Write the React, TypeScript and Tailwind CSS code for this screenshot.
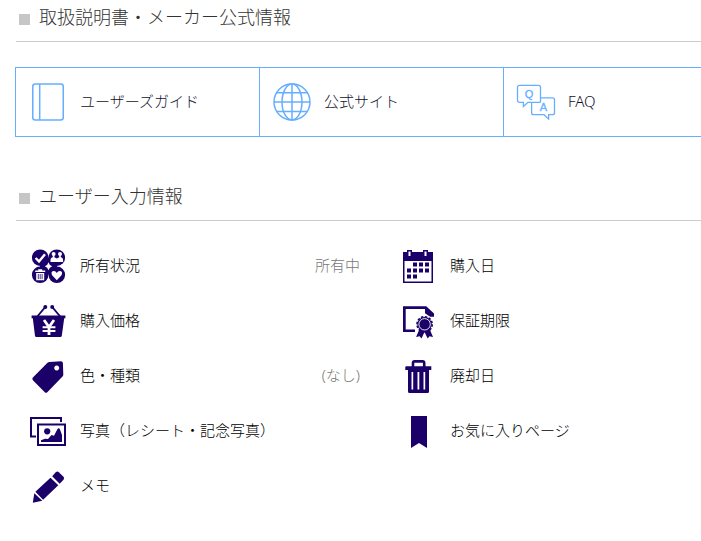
import type { ReactNode } from "react";

const navy = "#1a0068";
const sky = "#66aeff";

function LineIcon({ children }: { children: ReactNode }) {
  return (
    <svg viewBox="0 0 40 40" className="h-10 w-10" fill="none" stroke={sky} strokeWidth="1.5" aria-hidden="true">
      {children}
    </svg>
  );
}

function SolidIcon({ children }: { children: ReactNode }) {
  return (
    <svg viewBox="0 0 40 41" className="h-[41px] w-10" fill={navy} aria-hidden="true">
      {children}
    </svg>
  );
}

const BookIcon = () => (
  <LineIcon>
    <rect x="4.75" y="2" width="30.5" height="36" rx="2.5" />
    <path d="M11.7 2v36" />
  </LineIcon>
);

const GlobeIcon = () => (
  <LineIcon>
    <circle cx="20" cy="20" r="18" />
    <ellipse cx="20" cy="20" rx="10" ry="18" />
    <path d="M20 2v36M2 20h36M4.7 10.7h30.6M4.7 29.5h30.6" />
  </LineIcon>
);

const FaqIcon = () => (
  <LineIcon>
    <path
      strokeWidth="1.3"
      d="M24.5 20.3H12l-4.6 4.2v-4.2H3.5a2 2 0 0 1-2-2v-13a2 2 0 0 1 2-2h19a2 2 0 0 1 2 2v10.6h12a2 2 0 0 1 2 2v12.8a2 2 0 0 1-2 2h-3.9v4.4l-4.6-4.4H17.6a2 2 0 0 1-2-2V20.3M24.5 15.9v4.4"
    />
    <g fill={sky} strokeWidth="0.3" fontFamily="Liberation Sans, sans-serif" fontSize="11" textAnchor="middle">
      <text x="13" y="16">Q</text>
      <text x="27.3" y="28.5">A</text>
    </g>
  </LineIcon>
);

const StatusIcon = () => (
  <SolidIcon>
    <path d="M12 12.5h17v17H12z" />
    <circle cx="12.2" cy="12.7" r="8.3" />
    <circle cx="28.8" cy="12.7" r="8.3" />
    <circle cx="12.2" cy="29.8" r="8.3" />
    <circle cx="28.8" cy="29.8" r="8.3" />
    <path fill="#fff" d="M20.5 17.3Q21.3 20.5 24.2 21.2 21.3 22 20.5 25.2 19.7 22 16.8 21.2 19.7 20.5 20.5 17.3z" />
    <path fill="none" stroke="#fff" strokeWidth="2.4" d="M7.6 13l3.4 3.4 6-7.2" />
    <g fill="#fff">
      <circle cx="25.6" cy="9" r="2" />
      <circle cx="32" cy="9" r="2" />
      <path d="M22.5 17v-1.6q0-3 2.3-3.2v-2h1.6v2l2.4 1.2 2.4-1.2v-2h1.6v2q2.3.2 2.3 3.2V17z" />
      <path d="M10.2 24.2h4v1.3h3V27H7.2v-1.5h3zM8.2 28h8v7.2h-8z" />
      <path d="M28.8 35.2l-4.7-5q-1.7-3.6 1.4-4.2 2.2-.2 3.3 2 1.1-2.2 3.3-2 3.1.6 1.4 4.2z" />
    </g>
    <path stroke={navy} strokeWidth=".8" d="M10.3 29v5.2M12.2 29v5.2M14.1 29v5.2" />
  </SolidIcon>
);

const BasketIcon = () => (
  <SolidIcon>
    <circle cx="17.3" cy="7" r="2" />
    <circle cx="24.2" cy="7" r="2" />
    <path fill="none" stroke={navy} strokeWidth="1.9" d="M17.3 7l-8 9.5M24.2 7l8 9.5" />
    <path d="M3.6 15.6h33.8v2.6h-1.2l-2.4 17.6q-.2 1.2-1.4 1.2h-24q-1.2 0-1.4-1.2L4.8 18.2H3.6z" />
    <path fill="none" stroke="#fff" strokeWidth="2.8" d="M16 20l5 7 5-7M21 26v9" />
    <path stroke="#fff" strokeWidth="1.9" d="M14.6 27.3h12.8M14.6 31h12.8" />
  </SolidIcon>
);

const TagIcon = () => (
  <SolidIcon>
    <path
      fillRule="evenodd"
      d="M19.5 7.8Q20.3 7 21.5 6.9L33 6.3Q34.7 6.3 34.9 8L35.3 19.5Q35.3 20.8 34.5 21.6L19.3 37.2Q18 38.4 16.8 37.2L4.9 25.2Q3.7 23.9 4.9 22.6zM28.7 10.6a2.5 2.5 0 1 0 .01 0z"
    />
  </SolidIcon>
);

const PhotoIcon = () => (
  <SolidIcon>
    <g fill="none" stroke={navy} strokeWidth="2">
      <path d="M8 26.5H3V8h30v4" />
      <path d="M10 14.5h27V35H10z" />
    </g>
    <circle cx="19.2" cy="21.3" r="3.1" />
    <path d="M13 32v-1.8l4-1.5 3 .3 3.5-4 2.5.8 3.5-6.8q1.5-1.5 2.5.5L34 25v7z" />
  </SolidIcon>
);

const PencilIcon = () => (
  <SolidIcon>
    <path d="M24.2 11.3l3.6-4q1.5-1.4 3 0l4.7 4.4q1.3 1.5 0 3l-3.8 4z" />
    <path d="M7.4 26.8L22.5 12.7l7.8 7.5-15.2 14.6z" />
    <path d="M6.3 28.2l8 7.6-9.5 2z" />
  </SolidIcon>
);

const CalendarIcon = () => (
  <SolidIcon>
    <path fillRule="evenodd" d="M5 7h4V5h5v2h11V5h5v2h5v31H5zM6.500 16v20.500h27V16zM10.500 6.500v4.500h2V6.500zM26.500 6.500v4.500h2V6.500z" />
    <path d="M15 17.500h4v4h-4zM21 17.500h4v4h-4zM27 17.500h4v4h-4zM9 23.500h4v4H9zM15 23.500h4v4h-4zM21 23.500h4v4h-4zM27 23.500h4v4h-4zM9 29.500h4v4H9zM15 29.500h4v4h-4z" />
  </SolidIcon>
);

const WarrantyIcon = () => (
  <SolidIcon>
    <path d="M5 6.300h23.200L36 13.500v3.200h-4l-5-3.500V9H7.700v20.500H17V32H5z" />
    <circle cx="26.600" cy="24.300" r="9.300" fill="#fff" />
    <path d="M21.500 29l-3.400 8 3.500-.8 1.900 2.300 3-6.500 3.200 6.500 1.800-2.300 3.500.8-3.400-8z" />
    <circle cx="26.600" cy="24.300" r="7.200" />
    <circle cx="26.600" cy="24.300" r="7.600" fill="none" stroke={navy} strokeWidth="1.600" strokeDasharray="2.500 1.479" />
    <circle cx="26.600" cy="24.300" r="5.700" fill="none" stroke="#fff" strokeWidth=".9" />
  </SolidIcon>
);

const TrashIcon = () => (
  <SolidIcon>
    <path fill="none" stroke={navy} strokeWidth="2.600" d="M15 12V8q0-1.600 1.600-1.600h8Q26.200 6.400 26.200 8v4" />
    <path fillRule="evenodd" d="M8 11.300h25.300V15H31v21.500q0 1.500-1.500 1.500h-18Q10 38 10 36.500V15H7.300v-3zM13.500 17v17.500h1.700V17zM19.500 17v17.500h1.800V17zM25.500 17v17.500h1.700V17z" />
  </SolidIcon>
);

const BookmarkIcon = () => (
  <SolidIcon>
    <path d="M13 6h16v32l-8-5-8 5z" />
  </SolidIcon>
);

const guides = [
  { label: "ユーザーズガイド", Icon: BookIcon },
  { label: "公式サイト", Icon: GlobeIcon },
  { label: "FAQ", Icon: FaqIcon },
];

const fields = [
  { label: "所有状況", value: "所有中", Icon: StatusIcon },
  { label: "購入日", Icon: CalendarIcon },
  { label: "購入価格", Icon: BasketIcon },
  { label: "保証期限", Icon: WarrantyIcon },
  { label: "色・種類", value: "(なし)", Icon: TagIcon },
  { label: "廃却日", Icon: TrashIcon },
  { label: "写真（レシート・記念写真）", Icon: PhotoIcon },
  { label: "お気に入りページ", Icon: BookmarkIcon },
  { label: "メモ", Icon: PencilIcon },
];

function SectionTitle({ children }: { children: ReactNode }) {
  return (
    <h2 className="flex items-center gap-[9px] border-b border-[#cccccc] pb-[7px] pl-[3px] text-lg/[34px] font-light text-[#333333]">
      <span className="mt-1 h-[11px] w-[11px] bg-[#c6c6c6]" />
      <span>{children}</span>
    </h2>
  );
}

export default function App() {
  return (
    <main className="overflow-x-hidden bg-white pl-4 font-['Noto_Sans','Noto_Sans_CJK_JP',sans-serif] text-[15px] leading-6 font-light text-black">
      <section>
        <SectionTitle>取扱説明書・メーカー公式情報</SectionTitle>
        <nav className="mt-[25px] -ml-px flex">
          {guides.map(({ label, Icon }) => (
            <a key={label} href="#" className="flex h-[70px] w-[244px] shrink-0 items-center border-y border-l border-[#66aeff] text-[#10102c] last:w-[245px] last:border-r">
              <span className="flex w-16 justify-center">
                <Icon />
              </span>
              <span className="pb-0.5">{label}</span>
            </a>
          ))}
        </nav>
      </section>
      <section className="mt-[42px]">
        <SectionTitle>ユーザー入力情報</SectionTitle>
        <ul className="mt-[17px] grid grid-cols-[repeat(auto-fill,370px)] min-[640px]:grid-cols-[370px_370px]">
          {fields.map(({ label, value, Icon }) => (
            <li key={label}>
              <a href="#" className="flex h-[55px] items-center pr-[26px]">
                <span className="flex w-16 justify-center">
                  <Icon />
                </span>
                <span className="pb-0.5">{label}</span>
                {value && <span className="ml-auto pb-0.5 text-[#777777]">{value}</span>}
              </a>
            </li>
          ))}
        </ul>
      </section>
    </main>
  );
}
